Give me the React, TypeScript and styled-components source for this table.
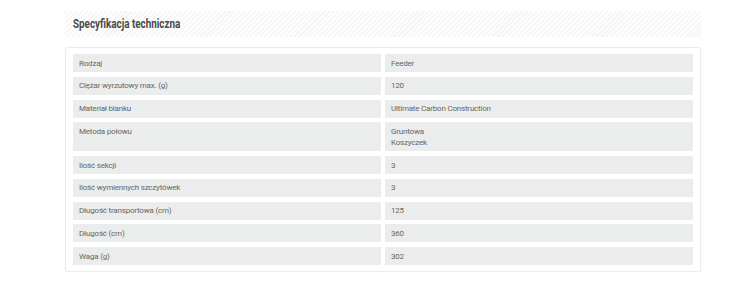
import React from "react";
import styled, { createGlobalStyle } from "styled-components";

const Global = createGlobalStyle`
  html, body { margin: 0; padding: 0; background: #ffffff; }
  body { font-family: Roboto, "Liberation Sans", sans-serif; }
`;

const Page = styled.div`
  padding: 11px 0 0 65px;
  width: 636px;
`;

const Header = styled.div`
  height: 26px;
  display: flex;
  align-items: center;
  padding-left: 8px;
  background: repeating-linear-gradient(
    -45deg,
    #f5f5f5 0px,
    #f5f5f5 1.5px,
    #fefefe 1.5px,
    #fefefe 3.5px
  );
`;

const Title = styled.h2`
  margin: 0;
  font-family: Roboto, "Liberation Sans", sans-serif;
  font-weight: 700;
  font-size: 12px;
  color: #4a4a4a;
  transform: scaleX(0.82);
  transform-origin: left center;
  white-space: nowrap;
`;

const Card = styled.div`
  margin-top: 10px;
  border: 1px solid #ececec;
  border-radius: 2px;
  box-shadow: 0 0 2px rgba(0, 0, 0, 0.04);
  padding: 6px 7px;
  display: grid;
  grid-template-columns: 1fr 1fr;
  column-gap: 4px;
  row-gap: 4.75px;
`;

const Cell = styled.div`
  background: #ebeded;
  padding: 3.5px 6px;
  font-size: 8px;
  line-height: 11px;
  letter-spacing: -0.2px;
  color: #666666;
  font-family: Roboto, "Liberation Sans", sans-serif;
`;

const rows: [string, string[]][] = [
  ["Rodzaj", ["Feeder"]],
  ["Ciężar wyrzutowy max. (g)", ["120"]],
  ["Materiał blanku", ["Ultimate Carbon Construction"]],
  ["Metoda połowu", ["Gruntowa", "Koszyczek"]],
  ["Ilość sekcji", ["3"]],
  ["Ilość wymiennych szczytówek", ["3"]],
  ["Długość transportowa (cm)", ["125"]],
  ["Długość (cm)", ["360"]],
  ["Waga (g)", ["302"]],
];

export default function App() {
  return (
    <>
      <Global />
      <Page>
        <Header>
          <Title>Specyfikacja techniczna</Title>
        </Header>
        <Card>
          {rows.map(([label, values]) => (
            <React.Fragment key={label}>
              <Cell>{label}</Cell>
              <Cell>
                {values.map((v) => (
                  <div key={v}>{v}</div>
                ))}
              </Cell>
            </React.Fragment>
          ))}
        </Card>
      </Page>
    </>
  );
}
